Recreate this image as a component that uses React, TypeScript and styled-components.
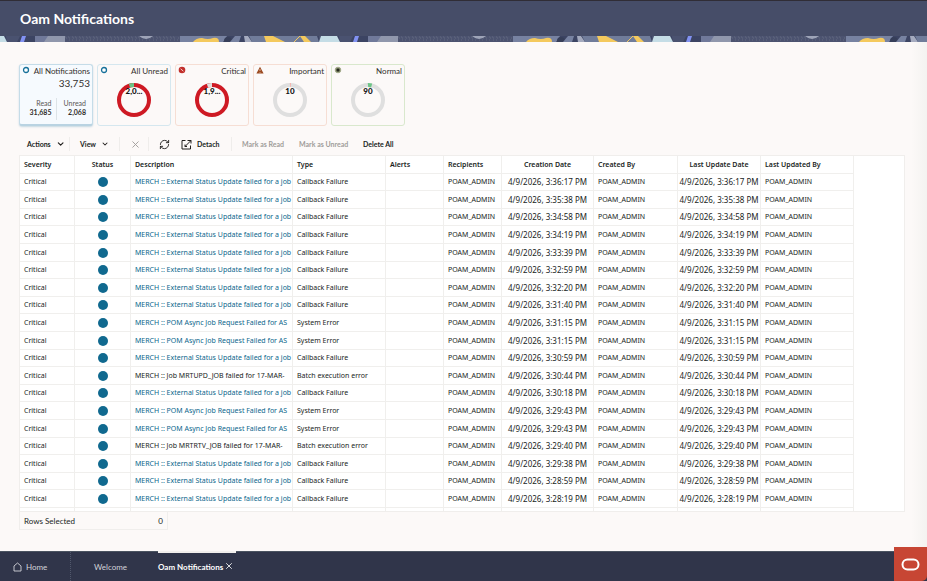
import React from "react";
import styled, { createGlobalStyle, css } from "styled-components";
import { ChevronDown, RefreshCw, X } from "lucide-react";

const GlobalStyle = createGlobalStyle`
  * { box-sizing: border-box; }
  body {
    margin: 0;
    background: #fcf9f8;
    color: #201e1c;
    font-family: Lato, "Open Sans", sans-serif;
    font-size: 8px;
    line-height: 10px;
  }
  button, output { font: inherit; color: inherit; }
  button { border: 0; padding: 0; background: none; cursor: pointer; }
`;

const Page = styled.div`
  display: flex;
  flex-direction: column;
  min-height: 100vh;
  overflow: hidden;
`;

const Header = styled.header`
  background: #464d68;
  border-top: 1px solid #302d36;
`;

const Title = styled.h1`
  margin: 0;
  padding: 9px 20px 8px;
  color: #fff;
  font-size: 14px;
  line-height: 18px;
  font-weight: 700;
`;

const Strip = styled.svg`
  display: block;
  width: 100%;
  height: 6px;
`;

const Main = styled.main`
  flex: 1;
  padding: 22px 22px 18px 19px;
  background: linear-gradient(to left, #f4f3f1, #fcf9f8 16px);
`;

const Cards = styled.div`
  display: flex;
  gap: 4px;
`;

const Card = styled.button<{ $edge: string; $active?: boolean }>`
  display: flex;
  flex-direction: column;
  width: 74px;
  height: 62px;
  padding: 1px 2px 0;
  border: 1px solid ${(p) => p.$edge};
  border-radius: 3px;
  ${(p) =>
    p.$active &&
    css`
      background: #f6fafe;
      border-bottom: 2px solid #b9d3e2;
      box-shadow: 0 1px 2px #c5d8e2;
    `}
`;

const CardTop = styled.span`
  display: flex;
  justify-content: space-between;
  align-items: flex-start;
  align-self: stretch;
  color: #33302d;
  svg { flex: none; }
`;

const Total = styled.span`
  align-self: flex-end;
  font-size: 10px;
  line-height: 14px;
  color: #33302d;
`;

const Split = styled.span`
  display: flex;
  align-self: stretch;
  margin-top: 8px;
`;

const Stat = styled.span`
  flex: 1;
  padding: 1px 4px 3px 0;
  text-align: right;
  font-size: 7px;
  line-height: 9px;
  color: #5b5855;
  & + & { border-left: 1px solid #dde3e7; }
`;

const StatValue = styled.strong`
  display: block;
  color: #33302d;
`;

const DonutSvg = styled.svg`
  align-self: center;
  width: 36px;
  height: 36px;
  margin-top: 6px;
  font-size: 8px;
  font-weight: 900;
`;

const Toolbar = styled.div`
  display: flex;
  align-items: center;
  height: 18px;
  margin: 9px 0 2px;
  padding-left: 8px;
  font-size: 7px;
  font-weight: 700;
`;

const Tool = styled.button<{ $width: number; $muted?: boolean }>`
  display: flex;
  align-items: center;
  flex: none;
  gap: 5px;
  width: ${(p) => p.$width}px;
  white-space: nowrap;
  color: ${(p) => (p.$muted ? "#a09d9a" : "#201e1c")};
`;

const MenuTool = styled(Tool)`
  justify-content: space-between;
`;

const Divider = styled.span<{ $before?: number }>`
  width: 1px;
  height: 14px;
  margin: 0 10px 0 ${(p) => p.$before ?? 0}px;
  background: #efedeb;
`;

const Panel = styled.div`
  overflow: hidden;
  border: 1px solid #f0eeec;
  background: #fff;
`;

const Table = styled.table`
  width: 834px;
  table-layout: fixed;
  border-collapse: separate;
  border-spacing: 0;
  font-family: "Noto Sans", "Open Sans", sans-serif;
  font-size: 7px;
`;

const Col = styled.col<{ $width: number }>`
  width: ${(p) => p.$width}px;
`;

const Row = styled.tr`
  height: 18px;
  &:nth-child(5n + 1), &:nth-child(5n + 3) { height: 17px; }
`;

const EndRow = styled.tr`
  height: 4px;
`;

const cell = css<{ $center?: boolean }>`
  padding: 0 0 0 ${(p) => (p.$center ? 0 : 4)}px;
  border-right: 1px solid #f0efed;
  text-align: ${(p) => (p.$center ? "center" : "left")};
  vertical-align: middle;
  white-space: nowrap;
  overflow: hidden;
`;

const Th = styled.th<{ $center?: boolean }>`
  ${cell}
  height: 17px;
  font-weight: 600;
`;

const Td = styled.td<{ $center?: boolean }>`
  ${cell}
  border-top: 1px solid #f0efed;
`;

const TimeCell = styled(Td)`
  font-size: 8px;
`;

const Link = styled.a`
  color: #0a668c;
  text-decoration: none;
`;

const Dot = styled.span`
  display: block;
  width: 10px;
  height: 10px;
  margin: 0 auto;
  border-radius: 50%;
  background: #10698f;
`;

const Selected = styled.div`
  display: flex;
  justify-content: space-between;
  width: 149px;
  padding: 4px 4px 3px;
  border: 1px solid #f0eeec;
  border-top: 0;
`;

const Nav = styled.nav`
  display: flex;
  height: 30px;
  background: #30354a;
  border-top: 1px solid #4a5360;
`;

const tab = css<{ $width: number; $active?: boolean }>`
  display: flex;
  align-items: center;
  flex: none;
  width: ${(p) => p.$width}px;
  color: ${(p) => (p.$active ? "#fff" : "#d3d4da")};
  text-decoration: none;
  font-weight: ${(p) => (p.$active ? 700 : 400)};
`;

const HomeTab = styled.a`
  ${tab}
  gap: 4px;
  padding-left: 13px;
  border-right: 1px dotted #51586c;
`;

const Tab = styled.a`
  ${tab}
  justify-content: center;
`;

const ActiveTab = styled.div`
  ${tab}
  justify-content: space-between;
  margin: -1px 0 0 8px;
  padding-right: 2px;
  border-top: 2px solid #f1efed;
  white-space: nowrap;
`;

const Assistant = styled.button`
  position: fixed;
  right: 0;
  bottom: 0;
  display: flex;
  align-items: center;
  justify-content: center;
  width: 33px;
  height: 34px;
  background: #c74634;
  border-bottom-right-radius: 5px;
`;

function HeaderArt() {
  return (
    <Strip aria-hidden="true">
      <defs>
        <pattern id="art" x="-14" width="333" height="6" patternUnits="userSpaceOnUse">
          <rect width="333" height="6" fill="#3c4463" />
          <path d="M0 0h2v3l-2 3zM20 0h14l-3 6H21z" fill="#4a5270" />
          <path d="M2 0h16l3 6H0z" fill="#c5dde6" />
          <path d="M36 0h4l-2 6h-4z" fill="#8292f2" />
          <path d="M49 0h30v6H49z" fill="#70799a" />
          <path d="M62 0h17v6H58z" fill="#9097ac" />
          <path d="M79 0h115v6H79z" fill="#4c5370" />
          <path d="M80 2h113M83 4h109M79 1h112" stroke="#62697f" strokeDasharray="1 2 1 3" />
          <path d="M153 0h14q-7 6-14 0z" fill="#9ea4b8" />
          <path d="M194 0h47l-4 6h-43z" fill="#7782a1" />
          <path d="M207 6q3-4 9-4 6 2 11 0 6-1 6 4z" fill="#f4c95d" />
          <circle cx="242" cy="5" r="4" fill="#363e59" />
          <path d="M244 6l5-6h6l-2 6z" fill="#7782a1" />
          <path d="M258 0h4l4 6h-7z" fill="#a5abbf" />
          <path d="M263 0h68l2 6h-67z" fill="#707c9a" />
          <path d="M278 0h9l12 6h-19z" fill="#f4c95d" />
          <path d="M314 0h5l6 6h-7z" fill="#f4c95d" />
          <path d="M308 6l6-6" stroke="#f4c95d" />
        </pattern>
      </defs>
      <rect width="100%" height="6" fill="url(#art)" />
    </Strip>
  );
}

type Kind = "ring" | "critical" | "important" | "normal";

function Marker({ kind }: { kind: Kind }) {
  return (
    <svg width="8" height="8" viewBox="0 0 8 8" aria-hidden="true">
      {kind === "ring" && <circle cx="4" cy="4" r="2.5" fill="#fff" stroke="#16709a" strokeWidth="1.3" />}
      {kind === "critical" && (
        <>
          <circle cx="4" cy="4" r="3.3" fill="#c22f2b" />
          <path d="M2.6 2.8l2.8 2.4" stroke="#f8e2de" strokeWidth=".9" />
        </>
      )}
      {kind === "important" && (
        <>
          <path d="M4 .7L7.6 7.6H.4z" fill="#9b4a20" />
          <path d="M4 3v2M4 6v.8" stroke="#e8c9b4" strokeWidth=".8" />
        </>
      )}
      {kind === "normal" && (
        <>
          <circle cx="4" cy="4" r="2.8" fill="#7c8266" stroke="#a5ac8c" strokeWidth="1" />
          <circle cx="4" cy="4" r="1.5" fill="#25291d" />
        </>
      )}
    </svg>
  );
}

type DonutProps = { label: string; base: string; slice: string; start: number; size: number };

function Donut({ label, base, slice, start, size }: DonutProps) {
  return (
    <DonutSvg viewBox="0 0 36 36">
      <circle cx="18" cy="18" r="15" fill="none" stroke={base} strokeWidth="4" />
      <circle
        cx="18"
        cy="18"
        r="15"
        fill="none"
        stroke={slice}
        strokeWidth="4"
        pathLength="100"
        strokeDasharray={`${size} ${100 - size}`}
        strokeDashoffset={25 - start}
      />
      <text x="18" y="12" textAnchor="middle" fill="#111">
        {label}
      </text>
    </DonutSvg>
  );
}

const summaries: (DonutProps & { title: string; kind: Kind; edge: string })[] = [
  { title: "All Unread", kind: "ring", edge: "#d5e7ef", label: "2,0...", base: "#ce1a24", slice: "#6cc486", start: -5, size: 5 },
  { title: "Critical", kind: "critical", edge: "#f6ded4", label: "1,9...", base: "#ce1a24", slice: "#e0e0e0", start: -5, size: 5 },
  { title: "Important", kind: "important", edge: "#f6ded4", label: "10", base: "#dfdfdf", slice: "#f6b3ad", start: 0, size: 1 },
  { title: "Normal", kind: "normal", edge: "#d9e8cd", label: "90", base: "#dfdfdf", slice: "#6cc486", start: 0, size: 4 },
];

const columns: { name: string; width: number; center?: boolean }[] = [
  { name: "Severity", width: 55 },
  { name: "Status", width: 56, center: true },
  { name: "Description", width: 162 },
  { name: "Type", width: 93 },
  { name: "Alerts", width: 58 },
  { name: "Recipients", width: 58 },
  { name: "Creation Date", width: 92, center: true },
  { name: "Created By", width: 84 },
  { name: "Last Update Date", width: 83, center: true },
  { name: "Last Updated By", width: 93 },
];

const callback = { text: "MERCH :: External Status Update failed for a job", type: "Callback Failure", link: true };
const system = { text: "MERCH :: POM Async Job Request Failed for AS", type: "System Error", link: true };
const batch = (job: string) => ({
  text: `MERCH :: Job ${job} failed for 17-MAR-`,
  type: "Batch execution error",
  link: false,
});

const notifications = [
  { time: "3:36:17", ...callback },
  { time: "3:35:38", ...callback },
  { time: "3:34:58", ...callback },
  { time: "3:34:19", ...callback },
  { time: "3:33:39", ...callback },
  { time: "3:32:59", ...callback },
  { time: "3:32:20", ...callback },
  { time: "3:31:40", ...callback },
  { time: "3:31:15", ...system },
  { time: "3:31:15", ...system },
  { time: "3:30:59", ...callback },
  { time: "3:30:44", ...batch("MRTUPD_JOB") },
  { time: "3:30:18", ...callback },
  { time: "3:29:43", ...system },
  { time: "3:29:43", ...system },
  { time: "3:29:40", ...batch("MRTRTV_JOB") },
  { time: "3:29:38", ...callback },
  { time: "3:28:59", ...callback },
  { time: "3:28:19", ...callback },
];

export default function App() {
  return (
    <Page>
      <GlobalStyle />
      <Header>
        <Title>Oam Notifications</Title>
        <HeaderArt />
      </Header>
      <Main>
        <Cards>
          <Card $edge="#c5dce8" $active>
            <CardTop>
              <Marker kind="ring" />
              All Notifications
            </CardTop>
            <Total>33,753</Total>
            <Split>
              <Stat>
                Read<StatValue>31,685</StatValue>
              </Stat>
              <Stat>
                Unread<StatValue>2,068</StatValue>
              </Stat>
            </Split>
          </Card>
          {summaries.map(({ title, kind, edge, ...donut }) => (
            <Card key={title} $edge={edge}>
              <CardTop>
                <Marker kind={kind} />
                {title}
              </CardTop>
              <Donut {...donut} />
            </Card>
          ))}
        </Cards>
        <Toolbar>
          <MenuTool $width={38}>
            Actions <ChevronDown size={10} strokeWidth={3} />
          </MenuTool>
          <Divider $before={4} />
          <MenuTool $width={29}>
            View <ChevronDown size={10} strokeWidth={3} />
          </MenuTool>
          <Divider $before={10} />
          <Tool $width={18} $muted aria-label="Delete">
            <X size={11} strokeWidth={2} />
          </Tool>
          <Divider />
          <Tool $width={22} aria-label="Refresh">
            <RefreshCw size={11} strokeWidth={2} />
          </Tool>
          <Tool $width={50}>
            <svg width="11" height="11" viewBox="0 0 11 11" fill="none" stroke="currentColor" aria-hidden="true">
              <path d="M4.5 1.5h-3.500v8.500h8.500V6.500M6.500 1.500h3.500v3M10 1.500L4 7.500M4 5.500v2h2" strokeWidth="1" />
            </svg>
            Detach
          </Tool>
          <Divider />
          <Tool $width={57} $muted>
            Mark as Read
          </Tool>
          <Tool $width={64} $muted>
            Mark as Unread
          </Tool>
          <Tool $width={40}>Delete All</Tool>
        </Toolbar>
        <Panel>
          <Table>
            <colgroup>
              {columns.map((c) => (
                <Col key={c.name} $width={c.width} />
              ))}
            </colgroup>
            <thead>
              <tr>
                {columns.map((c) => (
                  <Th key={c.name} $center={c.center} scope="col">
                    {c.name}
                  </Th>
                ))}
              </tr>
            </thead>
            <tbody>
              {notifications.map((n, i) => (
                <Row key={i}>
                  <Td>Critical</Td>
                  <Td $center>
                    <Dot role="img" aria-label="Unread" />
                  </Td>
                  <Td>{n.link ? <Link href="#">{n.text}</Link> : n.text}</Td>
                  <Td>{n.type}</Td>
                  <Td />
                  <Td>POAM_ADMIN</Td>
                  <TimeCell $center>4/9/2026, {n.time} PM</TimeCell>
                  <Td>POAM_ADMIN</Td>
                  <TimeCell $center>4/9/2026, {n.time} PM</TimeCell>
                  <Td>POAM_ADMIN</Td>
                </Row>
              ))}
              <EndRow>
                {columns.map((c) => (
                  <Td key={c.name} />
                ))}
              </EndRow>
            </tbody>
          </Table>
        </Panel>
        <Selected>
          <span>Rows Selected</span>
          <output>0</output>
        </Selected>
      </Main>
      <Nav>
        <HomeTab href="#" $width={71}>
          <svg width="9" height="10" viewBox="0 0 9 10" fill="none" stroke="currentColor" aria-hidden="true">
            <path d="M1 4L4.5 1 8 4v5H1z" strokeLinejoin="round" strokeWidth=".9" />
          </svg>
          Home
        </HomeTab>
        <Tab href="#" $width={79}>
          Welcome
        </Tab>
        <ActiveTab $width={78} $active>
          <span>Oam Notifications</span>
          <button aria-label="Close tab">
            <X size={10} strokeWidth={2} />
          </button>
        </ActiveTab>
      </Nav>
      <Assistant aria-label="Open assistant">
        <svg width="19" height="13" viewBox="0 0 19 13" fill="none" aria-hidden="true">
          <rect x="1.5" y="1.5" width="16" height="10" rx="5" stroke="#fff" strokeWidth="2" />
        </svg>
      </Assistant>
    </Page>
  );
}
